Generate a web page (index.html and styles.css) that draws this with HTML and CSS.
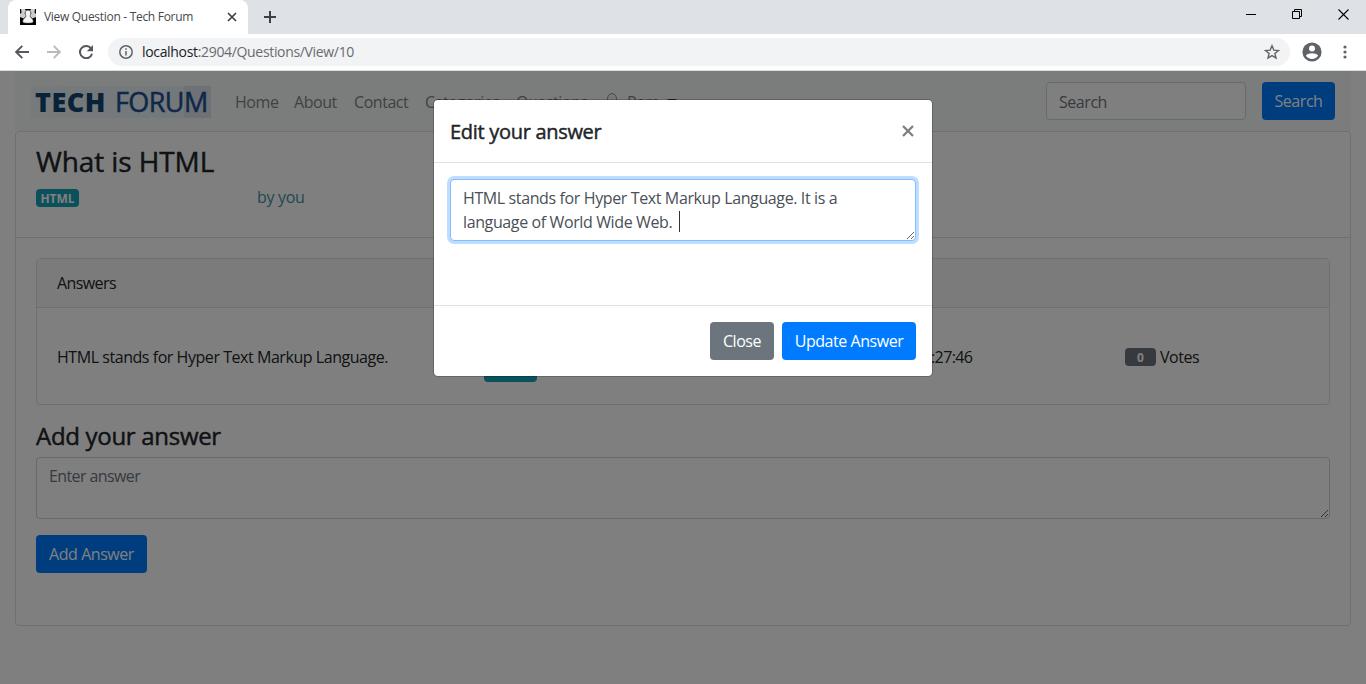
FILE: index.html
```html
<!DOCTYPE html>
<html lang="en">
<head>
<meta charset="utf-8">
<title>View Question - Tech Forum</title>
<link rel="stylesheet" href="styles.css">
</head>
<body>
<div class="tabstrip">
  <div class="tab">
    <svg class="favicon" width="16" height="16" viewBox="0 0 16 16">
      <rect width="16" height="16" fill="#000"/>
      <path d="M1 0h4l1 2-1.500 2L6 7 3.500 9.500 0 8V5l1.500-1.500zM15 0h-4l-1 2 1.500 2L10 7l2.500 2.500L16 8V5l-1.500-1.500z" fill="#ccc"/>
      <path d="M8 1.300c2.300 0 3 2 2.500 4L9.800 7c.5 1.500 3.400 3 3.400 5.500 0 1-2 1.500-5.200 1.500s-5.200-.5-5.200-1.500C2.800 10 5.700 8.500 6.200 7l-.7-1.700c-.5-2 .2-4 2.500-4z" fill="#f4f4f4" stroke="#777" stroke-width=".5"/>
    </svg>
    <span class="tab-title">View Question - Tech Forum</span>
    <svg class="tab-close" width="10" height="10" viewBox="0 0 10 10"><path d="M1 1l8 8M9 1l-8 8" stroke="#3c4043" stroke-width="1.700"/></svg>
  </div>
  <svg class="new-tab" width="12" height="12" viewBox="0 0 12 12"><path d="M6 0v12M0 6h12" stroke="#3c4043" stroke-width="2"/></svg>
  <div class="window-controls">
    <svg width="10" height="10" viewBox="0 0 10 10"><path d="M0 5.500h10" stroke="#000"/></svg>
    <svg width="10" height="10" viewBox="0 0 10 10"><path d="M.5 2.500h7v7h-7zM2.500 2.500v-2h7v7h-2" fill="none" stroke="#000"/></svg>
    <svg width="11" height="11" viewBox="0 0 11 11"><path d="M.5.5l10 10M10.500.5l-10 10" stroke="#000" stroke-width="1.100"/></svg>
  </div>
</div>
<div class="toolbar">
  <svg class="back" width="14" height="14" viewBox="0 0 14 14"><path d="M14 7H1.500M7.300.9L1.200 7l6.100 6.100" fill="none" stroke="#54585d" stroke-width="1.900"/></svg>
  <svg class="forward" width="14" height="14" viewBox="0 0 14 14"><path d="M0 7h12.500M6.700.9L12.800 7l-6.100 6.100" fill="none" stroke="#b9bbbe" stroke-width="1.900"/></svg>
  <svg class="reload" width="14" height="14" viewBox="0 0 14 14"><path d="M12.100 3.600A6.100 6.100 0 1 0 13 8.700" fill="none" stroke="#54585d" stroke-width="2"/><path d="M14 0v6.200H7.800z" fill="#54585d"/></svg>
  <div class="address">
    <svg width="14" height="14" viewBox="0 0 14 14"><circle cx="7" cy="7" r="6.200" fill="none" stroke="#5f6368" stroke-width="1.500"/><path d="M7 6v4.500M7 3.300v1.500" stroke="#5f6368" stroke-width="1.500"/></svg>
    <span class="url"><b>localhost</b>:2904/Questions/View/10</span>
    <svg class="star" width="16" height="16" viewBox="0 0 16 16"><path d="M8 1.800l1.800 4.300 4.700.4-3.600 3 1.100 4.600L8 11.600l-4 2.500 1.100-4.600-3.600-3 4.700-.4z" fill="none" stroke="#5f6368" stroke-width="1.400"/></svg>
  </div>
  <svg class="avatar" width="20" height="20" viewBox="0 0 20 20"><circle cx="10" cy="10" r="9.600" fill="#5f6368"/><circle cx="10" cy="6.500" r="3" fill="#fff"/><path d="M3.900 13.600C5 11.900 7.700 11.200 10 11.200s5 .7 6.100 2.400C15 15.800 12.500 17.100 10 17.100s-5-1.300-6.100-3.500z" fill="#fff"/></svg>
  <svg class="menu" width="4" height="14" viewBox="0 0 4 14"><g fill="#5f6368"><circle cx="2" cy="2" r="1.600"/><circle cx="2" cy="7" r="1.600"/><circle cx="2" cy="12" r="1.600"/></g></svg>
</div>

<div class="page">
  <div class="container">
    <nav class="navbar">
      <div class="logo"><span class="logo-bold">TECH</span><span class="logo-light">FORUM</span></div>
      <div class="links">
        <a class="home">Home</a><a class="about">About</a><a class="contact">Contact</a><a class="categories">Categories</a><a class="questions">Questions</a>
        <a class="user"><svg width="12" height="18" viewBox="0 0 12 18"><ellipse cx="6" cy="6" rx="4.600" ry="5.500" fill="#eee" stroke="#999"/><path d="M1 17q5-7 10 0z" fill="#999"/></svg>Ram<i class="caret"></i></a>
      </div>
      <input class="field search" placeholder="Search">
      <button class="btn primary search-btn">Search</button>
    </nav>
    <main class="card">
      <header class="question">
        <h3>What is HTML</h3>
        <div class="meta"><span class="tag-col"><span class="badge info">HTML</span></span><a class="author">by you</a></div>
      </header>
      <div class="card-body">
        <section class="card answers">
          <div class="card-header">Answers</div>
          <div class="answer">
            <span class="answer-text">HTML stands for Hyper Text Markup Language.</span>
            <span class="edit"></span>
            <span class="time">:27:46</span>
            <span class="votes"><span class="badge count">0</span><span>Votes</span></span>
          </div>
        </section>
        <h4>Add your answer</h4>
        <textarea class="field answer-field" placeholder="Enter answer"></textarea>
        <button class="btn primary add">Add Answer</button>
      </div>
    </main>
  </div>
  <div class="backdrop"></div>
  <div class="modal">
    <div class="modal-header"><h5>Edit your answer</h5><svg width="12" height="12" viewBox="0 0 12 12"><path d="M1 1l10 10M11 1L1 11" stroke="#7f7f7f" stroke-width="2.300"/></svg></div>
    <div class="modal-body">
      <textarea class="field focused">HTML stands for Hyper Text Markup Language. It is a
language of World Wide Web. </textarea>
      <i class="text-cursor"></i>
    </div>
    <div class="modal-footer"><button class="btn secondary">Close</button><button class="btn primary update">Update Answer</button></div>
  </div>
</div>
</body>
</html>
```
FILE: styles.css
```css
* { box-sizing: border-box; }
body {
  margin: 0;
  height: 684px;
  overflow: hidden;
  font: 16px/24px "Open Sans", "Noto Sans", sans-serif;
  letter-spacing: -0.45px;
  color: #212529;
  background: #fff;
}
svg { display: block; flex: none; }
h3, h4, h5 { margin: 0; font-weight: 400; -webkit-text-stroke: 0.45px currentColor; }

/* Browser window */
.tabstrip { display: flex; align-items: center; height: 34px; padding-left: 8px; background: #dee1e6; }
.tab {
  display: flex; align-items: center;
  width: 240px; height: 34px; padding: 0 11px 0 12px;
  border-radius: 8px 8px 0 0; background: #fff;
}
.tab-title { margin-left: 8px; flex: 1; font-size: 12px; letter-spacing: -0.3px; color: #45494d; white-space: nowrap; }
.new-tab { margin-left: 16px; }
.window-controls { display: flex; align-items: center; gap: 36px; margin: -6px 17px 0 auto; }
.toolbar { display: flex; align-items: center; height: 37px; padding: 0 19px 0 15px; border-bottom: 1px solid #dadce0; }
.forward { margin-left: 18px; }
.reload { margin-left: 18px; }
.address {
  display: flex; align-items: center; flex: none;
  width: 1182px; height: 28px; margin-left: 15px; padding: 0 10px 0 11px;
  border-radius: 14px; background: #f1f3f4;
}
.url { margin-left: 9px; flex: 1; font-size: 14px; letter-spacing: -0.33px; color: #686c70; }
.url b { font-weight: 400; color: #202124; }
.avatar { margin-left: 12px; }
.menu { margin-left: 21px; }

/* Page */
.page { position: relative; height: 613px; }
.container { padding: 0 15px; }
.navbar { display: flex; align-items: center; height: 60px; padding: 0 16px; background: #f7fbf9; }
.logo {
  display: flex; align-items: center;
  width: 180px; height: 32px; margin-top: 2px; padding-left: 4px;
  font-size: 27px; line-height: 32px;
  background: linear-gradient(90deg, #eef4f5 0, #e6f1f7 85%, #dde2eb 85%);
}
.logo-bold { width: 80px; font-weight: 800; letter-spacing: 0.5px; color: #104672; }
.logo-light { letter-spacing: -0.6px; color: #1f4f93; -webkit-text-stroke: 0.5px currentColor; }
.links { display: flex; margin: 2px 0 0 24px; flex: 1; color: #808381; white-space: nowrap; }
.home { width: 59px; }
.about { width: 60px; }
.contact { width: 71px; }
.categories { width: 91px; }
.questions { width: 90px; }
.user { display: flex; align-items: center; }
.user svg { margin-right: 9px; }
.caret { margin: -2px 0 0 8px; border: 5px solid transparent; border-top-color: #444; border-bottom: 0; }
.field {
  display: block; width: 100%; height: 62px; padding: 6px 12px;
  border: 1px solid #ced4da; border-radius: 4px; outline: 0;
  background: #fff; color: #495057; font: inherit; letter-spacing: inherit; overflow: hidden;
}
.field::placeholder { color: #6c757d; opacity: 1; }
.answer-field { letter-spacing: -0.6px; }
.search { width: 200px; height: 38px; margin-right: 16px; padding-top: 8px; }
.btn {
  height: 38px; padding: 0; border: 0; border-radius: 4px;
  color: #fff; font: inherit; letter-spacing: inherit;
}
.primary { background: #007bff; }
.secondary { width: 64px; background: #6c757d; }
.search-btn { width: 73px; }
.card { border: 1px solid #dfdfdf; border-radius: 4px; background: #fff; }
main.card { height: 495px; }
.question { height: 106px; padding: 12px 20px; border-bottom: 1px solid #dfdfdf; }
h3 { margin-bottom: 7px; font-size: 28px; line-height: 34px; letter-spacing: -0.1px; }
.meta { display: flex; }
.tag-col { width: 221px; padding-top: 4px; line-height: 18px; }
.badge {
  display: block; height: 18px; border-radius: 4px; text-align: center;
  color: #fff; font-size: 12px; line-height: 19px; font-weight: 700; letter-spacing: 0;
}
.info { width: 43px; background: #17a2b8; }
.author { color: #3f8fa5; letter-spacing: -0.3px; }
.card-body { padding: 20px; }
.answers { height: 147px; }
.card-header { height: 49px; padding: 12px 20px; border-bottom: 1px solid #dfdfdf; background: #f7f7f7; letter-spacing: -0.6px; }
.answer { display: flex; align-items: center; height: 97px; padding: 0 20px; }
.answer-text { width: 427px; }
.edit { width: 53px; height: 36px; margin-top: 15px; border-radius: 4px; background: #17a2b8; }
.time { width: 194px; margin-left: 394px; letter-spacing: -0.6px; }
.votes { display: flex; align-items: center; gap: 4px; }
.count { width: 31px; background: #6c757d; }
h4 { margin: 16px 0 7px; font-size: 24px; line-height: 29px; letter-spacing: -0.3px; }
.add { width: 111px; margin-top: 16px; }
.backdrop { position: absolute; inset: 0; background: rgba(0, 0, 0, .5); }

/* Dialog */
.modal {
  position: absolute; top: 28px; left: 433px; width: 500px;
  border: 1px solid rgba(0, 0, 0, .2); border-radius: 5px;
  background: #fff; background-clip: padding-box;
}
.modal-header { display: flex; align-items: center; justify-content: space-between; height: 63px; padding: 0 18px 0 16px; border-bottom: 1px solid #dee2e6; }
h5 { padding-top: 2px; font-size: 20px; line-height: 30px; letter-spacing: -0.3px; }
.modal-body { position: relative; height: 142px; padding: 16px; }
.focused { border-color: #80bdff; box-shadow: 0 0 0 3px #bfdeff; letter-spacing: -0.38px; }
.text-cursor { position: absolute; left: 245px; top: 48px; width: 1px; height: 21px; background: #333; }
.modal-footer { display: flex; justify-content: flex-end; gap: 8px; padding: 16px; border-top: 1px solid #dee2e6; }
.update { width: 134px; }
```
